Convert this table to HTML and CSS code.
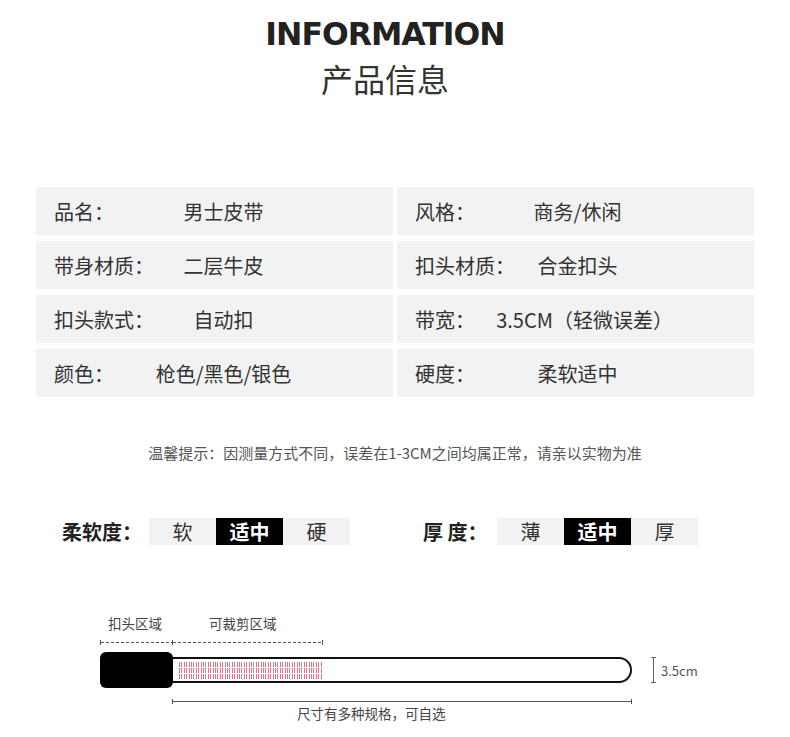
FILE: index.html
```html
<!DOCTYPE html>
<html lang="zh-CN">
<head>
  <meta charset="UTF-8" />
  <meta name="viewport" content="width=device-width, initial-scale=1.0" />
  <title>产品信息 – 男士皮带</title>
  <link rel="stylesheet" href="styles.css">
</head>
<body>
  <div class="page">
    <!-- Heading -->
    <header class="heading">
      <h1 class="heading-en">INFORMATION</h1>
      <h2 class="heading-cn">产品信息</h2>
    </header>

    <!-- Spec table -->
    <div class="specs">
      <div class="cell"><span class="label">品名：</span><span class="value"><span>男士皮带</span></span></div>
      <div class="cell"><span class="label">风格：</span><span class="value"><span>商务/休闲</span></span></div>
      <div class="cell"><span class="label">带身材质：</span><span class="value"><span>二层牛皮</span></span></div>
      <div class="cell"><span class="label">扣头材质：</span><span class="value"><span>合金扣头</span></span></div>
      <div class="cell"><span class="label">扣头款式：</span><span class="value"><span>自动扣</span></span></div>
      <div class="cell"><span class="label">带宽：</span><span class="value wide"><span>3.5CM（轻微误差）</span></span></div>
      <div class="cell"><span class="label">颜色：</span><span class="value"><span>枪色/黑色/银色</span></span></div>
      <div class="cell"><span class="label">硬度：</span><span class="value"><span>柔软适中</span></span></div>
    </div>

    <p class="tip">温馨提示：因测量方式不同，误差在1-3CM之间均属正常，请亲以实物为准</p>

    <!-- Softness / thickness scales -->
    <div class="scales">
      <div class="scale">
        <span class="scale-label soft">柔软度：</span>
        <div class="scale-bar">
          <span class="opt">软</span>
          <span class="opt active">适中</span>
          <span class="opt">硬</span>
        </div>
      </div>
      <div class="scale">
        <span class="scale-label thick">厚 度：</span>
        <div class="scale-bar">
          <span class="opt">薄</span>
          <span class="opt active">适中</span>
          <span class="opt">厚</span>
        </div>
      </div>
    </div>

    <!-- Belt diagram -->
    <div class="diagram">
      <div class="zone-labels">
        <span class="zone-buckle">扣头区域</span>
        <span class="zone-cut">可裁剪区域</span>
      </div>
      <div class="ruler-top">
        <span class="seg seg-buckle"></span>
        <span class="seg seg-cut"></span>
      </div>
      <div class="belt">
        <div class="buckle"></div>
        <div class="strap">
          <div class="hatch"></div>
        </div>
        <div class="width-mark"></div>
        <span class="width-text">3.5cm</span>
      </div>
      <div class="ruler-bottom"></div>
      <p class="caption">尺寸有多种规格，可自选</p>
    </div>
  </div>
</body>
</html>
```

FILE: styles.css
```css
body {
  margin: 0;
  background: #fff;
  font-family: 'Noto Sans CJK SC', 'Noto Sans', sans-serif;
  color: #333;
}
.page {
  width: 790px;
  height: 737px;
  overflow: hidden;
}

/* heading */
.heading {
  text-align: center;
  padding: 16px 20px 0 0;
}
.heading-en {
  margin: 0;
  font-family: 'DejaVu Sans', sans-serif;
  font-weight: bold;
  font-size: 31.5px;
  line-height: 36px;
  letter-spacing: -1px;
  color: #222;
}
.heading-cn {
  margin: 7px 0 0;
  font-weight: normal;
  font-size: 32px;
  line-height: 38px;
  color: #333;
}

/* spec table */
.specs {
  display: grid;
  grid-template-columns: 357px 357px;
  column-gap: 4px;
  row-gap: 6px;
  margin: 90px 0 0 36px;
}
.cell {
  display: grid;
  grid-template-columns: 100px minmax(0, 1fr);
  align-items: center;
  height: 48px;
  padding: 0 100px 0 18px;
  background: #f2f2f2;
  font-size: 20px;
  color: #333;
}
.cell:nth-child(even) {
  padding-right: 114px;
}
.label {
  white-space: nowrap;
}
.value {
  display: flex;
  justify-content: center;
  white-space: nowrap;
  min-width: 0;
}
.value.wide {
  padding-left: 14px;
}

.tip {
  margin: 46px 0 0;
  text-align: center;
  font-size: 15px;
  line-height: 20px;
  color: #555;
}

/* scales */
.scales {
  display: flex;
  gap: 73px;
  margin-top: 54px;
  padding-left: 62px;
}
.scale {
  display: flex;
  align-items: center;
}
.scale-label {
  font-size: 20px;
  font-weight: bold;
  color: #222;
  white-space: nowrap;
}
.scale-label.soft { width: 87px; }
.scale-label.thick { width: 74px; }
.scale-bar {
  display: flex;
  background: #f2f2f2;
}
.opt {
  width: 67px;
  height: 27px;
  line-height: 27px;
  text-align: center;
  font-size: 20px;
  color: #333;
}
.opt.active {
  background: #000;
  color: #fff;
  font-weight: bold;
}

/* belt diagram */
.diagram {
  margin: 68px 0 0 100px;
  width: 620px;
  color: #444;
}
.zone-labels {
  display: flex;
  font-size: 13.5px;
  line-height: 18px;
}
.zone-buckle { margin-left: 8px; }
.zone-cut { margin-left: 47px; }

.ruler-top {
  display: flex;
  margin-top: 8px;
}
.seg {
  height: 5px;
  border-left: 1px solid #555;
  background: repeating-linear-gradient(90deg, #555 0 3px, transparent 3px 5px) center / 100% 1px no-repeat;
}
.seg-buckle { width: 71px; }
.seg-cut {
  width: 149px;
  border-right: 1px solid #555;
}

.belt {
  display: flex;
  align-items: center;
  margin-top: 7px;
}
.buckle {
  width: 73px;
  height: 36px;
  background: #000;
  border-radius: 6px;
}
.strap {
  box-sizing: border-box;
  width: 459px;
  height: 26px;
  border: 2px solid #111;
  border-left: none;
  border-radius: 0 13px 13px 0;
  display: flex;
  align-items: center;
}
.hatch {
  width: 143px;
  height: 17px;
  margin-left: 6px;
  background:
    repeating-linear-gradient(180deg, transparent 0 5px, #fff 5px 6px),
    repeating-linear-gradient(90deg, #e5737d 0 1px, transparent 1px 2.4px);
}
.width-mark {
  box-sizing: border-box;
  width: 5px;
  height: 26px;
  margin-left: 19px;
  border-top: 1px solid #666;
  border-bottom: 1px solid #666;
  background: linear-gradient(#666, #666) center / 1px 100% no-repeat;
}
.width-text {
  margin-left: 5px;
  font-size: 13px;
  color: #555;
}

.ruler-bottom {
  box-sizing: border-box;
  width: 460px;
  height: 5px;
  margin: 11px 0 0 72px;
  border-left: 1px solid #555;
  border-right: 1px solid #555;
  background: linear-gradient(#555, #555) center / 100% 1px no-repeat;
}
.caption {
  margin: 0 0 0 197px;
  font-size: 13.5px;
  line-height: 18px;
  color: #444;
}
```
